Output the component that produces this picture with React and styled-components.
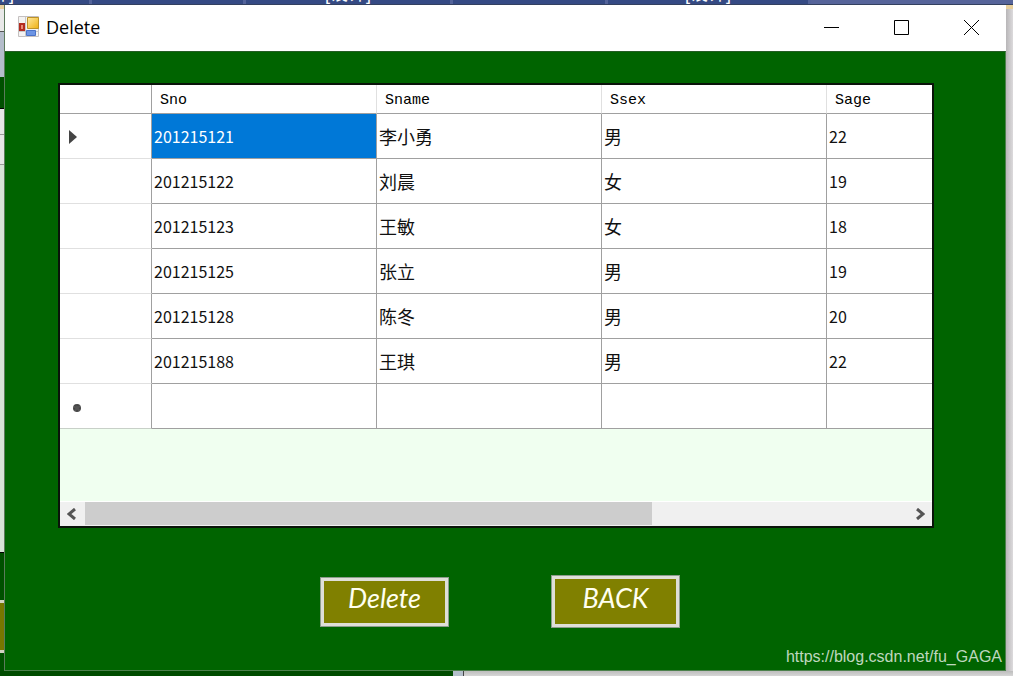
import React from 'react';
import styled, { createGlobalStyle } from 'styled-components';

const columns = ['Sno', 'Sname', 'Ssex', 'Sage'];

const students = [
  { sno: '201215121', sname: '李小勇', ssex: '男', sage: '22' },
  { sno: '201215122', sname: '刘晨', ssex: '女', sage: '19' },
  { sno: '201215123', sname: '王敏', ssex: '女', sage: '18' },
  { sno: '201215125', sname: '张立', ssex: '男', sage: '19' },
  { sno: '201215128', sname: '陈冬', ssex: '男', sage: '20' },
  { sno: '201215188', sname: '王琪', ssex: '男', sage: '22' },
];

export default function App() {
  return (
    <Desktop>
      <GlobalStyle />
      <TabStrip>
        <Tab $width={92}>[设计]</Tab>
        <Tab $width={154} />
        <Tab $width={207}>[设计]</Tab>
        <Tab $width={155} />
        <Tab $width={203}>[设计]</Tab>
        <TabRest />
      </TabStrip>
      <Middle>
        <LeftEdge>
          <Piece $height={4} $color="#e8cf9c" />
          <Piece $height={23} $color="#e9e9e9" $line="#555" />
          <Piece $height={45} $color="#b4bdcb" />
          <Piece $height={32} $color="#005000" $line="#000" />
          <Piece $height={26} $color="#e6e6e6" $line="#999" />
          <Piece $height={30} $color="#e6e6e6" $line="#999" />
          <Piece $height={388} $color="#d6e4d6" $line="#000" />
          <Piece $height={47} $color="#005000" />
          <Piece $height={53} $color="#777700" $framed />
          <Piece $color="#005000" />
        </LeftEdge>
        <Window>
          <TitleBar>
            <FormIcon />
            <h1>Delete</h1>
            <WindowButton aria-label="Minimize">
              <svg width="15" height="15"><path d="M0 7.5h15" /></svg>
            </WindowButton>
            <WindowButton aria-label="Maximize">
              <svg width="15" height="15"><path d="M.5.5h14v14H.5z" /></svg>
            </WindowButton>
            <WindowButton aria-label="Close">
              <svg width="15" height="15"><path d="M0 0l15 15M15 0L0 15" /></svg>
            </WindowButton>
          </TitleBar>
          <Client>
            <Grid>
              <Table>
                <thead>
                  <tr>
                    <Corner />
                    {columns.map((name) => (
                      <ColumnHeader key={name} scope="col">{name}</ColumnHeader>
                    ))}
                  </tr>
                </thead>
                <tbody>
                  {students.map((s, i) => (
                    <tr key={s.sno}>
                      <RowHeader>
                        {i === 0 && (
                          <svg width="8" height="14"><path d="M0 0l8 7-8 7z" fill="#444" /></svg>
                        )}
                      </RowHeader>
                      <Cell $selected={i === 0}>{s.sno}</Cell>
                      <Cell $chinese>{s.sname}</Cell>
                      <Cell $chinese>{s.ssex}</Cell>
                      <Cell>{s.sage}</Cell>
                    </tr>
                  ))}
                  <tr>
                    <RowHeader $last>
                      <NewRowMark />
                    </RowHeader>
                    <Cell />
                    <Cell />
                    <Cell />
                    <Cell />
                  </tr>
                </tbody>
              </Table>
              <Empty />
              <ScrollBar>
                <ScrollButton aria-label="Scroll left">
                  <svg width="12" height="12"><path d="M8 1L2 6l6 5" /></svg>
                </ScrollButton>
                <Track>
                  <Thumb />
                </Track>
                <ScrollButton aria-label="Scroll right">
                  <svg width="10" height="12"><path d="M2 1l6 5-6 5" /></svg>
                </ScrollButton>
              </ScrollBar>
            </Grid>
            <Actions>
              <ActionButton $height={50}>Delete</ActionButton>
              <ActionButton $height={53}>BACK</ActionButton>
            </Actions>
            <Watermark href="https://blog.csdn.net/fu_GAGA">https://blog.csdn.net/fu_GAGA</Watermark>
          </Client>
        </Window>
        <RightEdge />
      </Middle>
      <BottomEdge>
        <BottomForm />
        <BottomSplit />
        <BottomPanel />
      </BottomEdge>
    </Desktop>
  );
}

function FormIcon() {
  return (
    <svg width="22" height="22" viewBox="0 0 22 22" aria-hidden="true">
      <defs>
        <linearGradient id="gold" x1="0" y1="0" x2="1" y2="1">
          <stop offset="0" stopColor="#ffe9a0" />
          <stop offset="1" stopColor="#eeb010" />
        </linearGradient>
      </defs>
      <path d="M.5.5h20v20H.5z" fill="#f4f3f2" stroke="#c4c0c0" />
      <path d="M7.5 1v20M1 15.5h20" stroke="#c8c8c8" />
      <path d="M1 7h6v8H1z" fill="#b32c20" />
      <path d="M3 9h2v4H3z" fill="#e98a76" />
      <path d="M8.5 14.5h9v5h-9z" fill="#6c94e4" stroke="#4a72c8" />
      <path d="M9.5 1.5h11v11h-11z" fill="url(#gold)" stroke="#bd9329" />
    </svg>
  );
}

const GlobalStyle = createGlobalStyle`
  * {
    box-sizing: border-box;
  }
  body {
    margin: 0;
    font-family: "Liberation Sans", "Noto Sans CJK SC", sans-serif;
  }
  button {
    padding: 0;
    border: none;
    background: none;
    cursor: pointer;
  }
`

const Desktop = styled.div`
  display: flex;
  flex-direction: column;
  min-height: 100vh;
  background-color: #d5d5d5;
`
const TabStrip = styled.div`
  display: flex;
  height: 5px;
  overflow: hidden;
  background-color: #354a84;
  border-bottom: 1px solid #33405f;
`
const Tab = styled.div`
  display: flex;
  flex: none;
  align-items: flex-end;
  justify-content: center;
  width: ${({ $width }) => $width}px;
  border-right: 3px solid #53639a;
  color: #fff;
  font-size: 18px;
  line-height: 20px;
  &:first-child {
    justify-content: flex-start;
    text-indent: -32px;
  }
`
const TabRest = styled.div`
  flex: 1;
  background-color: #56649a;
`
const Middle = styled.div`
  display: flex;
  flex: 1;
`
const LeftEdge = styled.div`
  display: flex;
  flex-direction: column;
  width: 5px;
  border-right: 1px solid #5c7a5c;
`
const Piece = styled.div`
  flex: ${({ $height }) => ($height ? `0 0 ${$height}px` : '1')};
  background-color: ${({ $color }) => $color};
  border-bottom: ${({ $line }) => ($line ? `1px solid ${$line}` : 'none')};
  ${({ $framed }) => $framed && `
    border-top: 3px solid #d4d4c4;
    border-bottom: 3px solid #d4d4c4;
  `}
`
const RightEdge = styled.div`
  width: 7px;
  border-top: 4px solid #e8cf9c;
  background: linear-gradient(to right, #b8b6b8, #dcdadc);
`
const BottomEdge = styled.div`
  display: flex;
  height: 5px;
`
const BottomForm = styled.div`
  flex: 453;
  background-color: #004c00;
`
const BottomSplit = styled.div`
  width: 11px;
  background-color: #b4bfcb;
  border-right: 1px solid #444;
`
const BottomPanel = styled.div`
  flex: 549;
  background: linear-gradient(#bdbdbd, #d6d6d6);
`
const Window = styled.main`
  display: flex;
  flex: 1;
  flex-direction: column;
  min-width: 0;
`
const TitleBar = styled.header`
  display: flex;
  align-items: center;
  height: 46px;
  padding: 0 0 2px 13px;
  background-color: #fff;
  h1 {
    flex: 1;
    margin: 0 0 0 6px;
    font-family: "Open Sans", "Noto Sans", sans-serif;
    font-size: 18px;
    font-weight: 400;
    line-height: 26px;
    color: #000;
  }
`
const WindowButton = styled.button`
  display: flex;
  align-items: center;
  justify-content: center;
  width: 70px;
  height: 44px;
  svg {
    fill: none;
    stroke: #000;
  }
`
const Client = styled.div`
  position: relative;
  display: flex;
  flex: 1;
  flex-direction: column;
  padding: 31px 71px 0 53px;
  background-color: #006400;
  border-top: 1px solid #245c24;
  border-right: 1px solid #4c804c;
  border-bottom: 1px solid #4c804c;
`
const Grid = styled.section`
  display: flex;
  flex-direction: column;
  min-height: 445px;
  overflow: hidden;
  border: 2px solid #0a140a;
  background-color: #fff;
`
const Table = styled.table`
  width: 992px;
  table-layout: fixed;
  border-collapse: separate;
  border-spacing: 0;
  background-color: #fff;
`
const Corner = styled.td`
  width: 92px;
  height: 29px;
  padding: 0;
  border-right: 1px solid #a0a0a0;
  border-bottom: 1px solid #a0a0a0;
`
const ColumnHeader = styled.th`
  width: 225px;
  height: 29px;
  padding: 4px 0 0 8px;
  border-right: 1px solid #e0e0e0;
  border-bottom: 1px solid #a0a0a0;
  font-family: "Liberation Mono", monospace;
  font-size: 15px;
  font-weight: 400;
  line-height: 18px;
  text-align: left;
  color: #000;
`
const RowHeader = styled.th`
  height: 45px;
  padding: 2px 0 0 9px;
  border-right: 1px solid #a0a0a0;
  border-bottom: 1px solid ${({ $last }) => ($last ? '#c8d0c8' : '#e0e0e0')};
  text-align: left;
  svg {
    display: block;
  }
`
const NewRowMark = styled.div`
  width: 8px;
  height: 8px;
  margin: 2px 0 0 4px;
  border: 2px dotted #444;
  border-radius: 50%;
  background-color: #555;
`
const Cell = styled.td`
  height: 45px;
  padding: 0 2px;
  border-right: 1px solid #a0a0a0;
  border-bottom: 1px solid #a0a0a0;
  background-color: ${({ $selected }) => ($selected ? '#0078d7' : '#fff')};
  color: ${({ $selected }) => ($selected ? '#fff' : '#111')};
  font-family: "Noto Sans CJK SC", sans-serif;
  font-size: ${({ $chinese }) => ($chinese ? 18 : 16)}px;
  line-height: 24px;
`
const Empty = styled.div`
  flex: 1;
  background-color: #f0fff0;
  border-bottom: 1px solid #fff;
`
const ScrollBar = styled.div`
  display: flex;
  height: 24px;
  background-color: #f0f0f0;
`
const ScrollButton = styled.button`
  display: flex;
  align-items: center;
  justify-content: center;
  width: 25px;
  svg {
    fill: none;
    stroke: #555;
    stroke-width: 3;
  }
`
const Track = styled.div`
  flex: 1;
`
const Thumb = styled.div`
  width: 69%;
  height: 23px;
  background-color: #cdcdcd;
`
const Actions = styled.div`
  display: flex;
  align-items: center;
  justify-content: center;
  gap: 102px;
  padding: 47px 0 42px 8px;
`
const ActionButton = styled.button`
  width: 129px;
  height: ${({ $height }) => $height}px;
  padding-bottom: 8px;
  border: 4px solid #dfdfd8;
  outline: 1px solid #8c9c8c;
  outline-offset: -1px;
  background-color: #808000;
  color: #fffff0;
  font-family: "Segoe Script", "Bradley Hand", Lato, sans-serif;
  font-size: 27px;
  font-style: italic;
  line-height: 30px;
`
const Watermark = styled.a`
  position: absolute;
  right: 3px;
  bottom: 4px;
  font-size: 16px;
  line-height: 18px;
  color: rgba(255, 255, 255, 0.75);
  text-decoration: none;
`
